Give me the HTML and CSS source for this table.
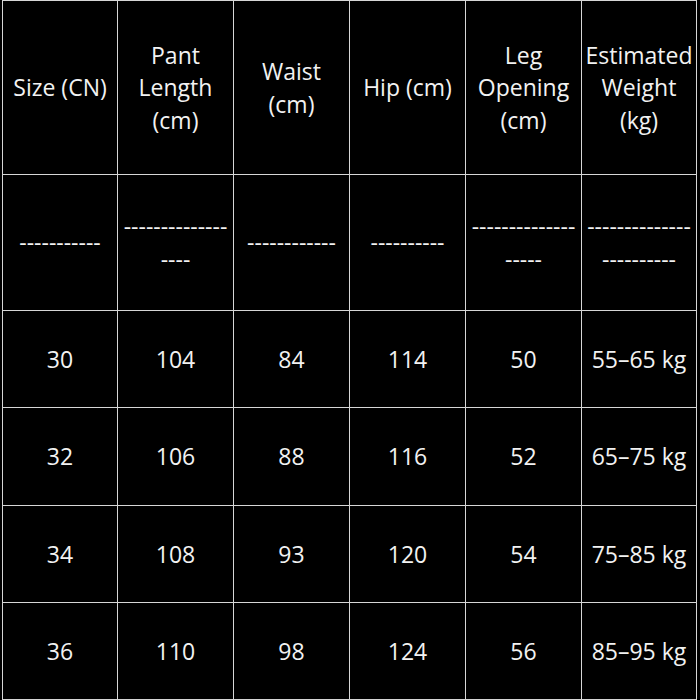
FILE: index.html
```html
<!DOCTYPE html>
<html>
<head>
<meta charset="utf-8">
<link rel="stylesheet" href="styles.css">
</head>
<body>
<div class="table">
  <div class="cell head">Size (CN)</div>
  <div class="cell head">Pant<br>Length<br>(cm)</div>
  <div class="cell head">Waist<br>(cm)</div>
  <div class="cell head">Hip (cm)</div>
  <div class="cell head">Leg<br>Opening<br>(cm)</div>
  <div class="cell head">Estimated<br>Weight<br>(kg)</div>

  <div class="cell sep">-----------</div>
  <div class="cell sep">--------------<br>----</div>
  <div class="cell sep">------------</div>
  <div class="cell sep">----------</div>
  <div class="cell sep">--------------<br>-----</div>
  <div class="cell sep">--------------<br>----------</div>

  <div class="cell">30</div>
  <div class="cell">104</div>
  <div class="cell">84</div>
  <div class="cell">114</div>
  <div class="cell">50</div>
  <div class="cell">55–65 kg</div>

  <div class="cell">32</div>
  <div class="cell">106</div>
  <div class="cell">88</div>
  <div class="cell">116</div>
  <div class="cell">52</div>
  <div class="cell">65–75 kg</div>

  <div class="cell">34</div>
  <div class="cell">108</div>
  <div class="cell">93</div>
  <div class="cell">120</div>
  <div class="cell">54</div>
  <div class="cell">75–85 kg</div>

  <div class="cell">36</div>
  <div class="cell">110</div>
  <div class="cell">98</div>
  <div class="cell">124</div>
  <div class="cell">56</div>
  <div class="cell">85–95 kg</div>
</div>
</body>
</html>
```

FILE: styles.css
```css
html, body {
  margin: 0;
  padding: 0;
  background: #000;
  width: 700px;
  height: 700px;
  overflow: hidden;
}

.table {
  margin-left: 2px;
  display: grid;
  grid-template-columns: 114px 115px 115px 115px 115px 114px;
  grid-template-rows: 173px 135px 96px 97px 96px 96px;
  gap: 1px;
  padding: 1px;
  background: #d6d6d6;
  width: max-content;
  font-family: "Open Sans", "Liberation Sans", sans-serif;
  font-size: 23px;
  line-height: 32.5px;
  color: #f2f2f2;
}

.cell {
  background: #000;
  display: flex;
  align-items: center;
  justify-content: center;
  text-align: center;
  white-space: nowrap;
}
```
